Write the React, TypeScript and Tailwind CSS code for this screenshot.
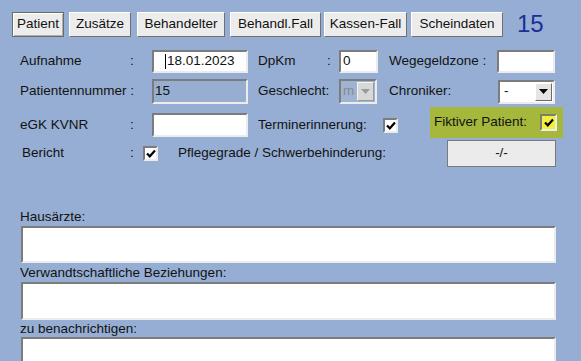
import React from "react";

const sunken =
  "border-2 border-t-[#7c7c7c] border-l-[#7c7c7c] border-r-[#ececec] border-b-[#ececec]";

function Check({ yellow = false, size = 15 }: { yellow?: boolean; size?: number }) {
  return (
    <div
      className={`${sunken} flex items-center justify-center ${yellow ? "bg-[#f3f03c]" : "bg-white"}`}
      style={{ width: size, height: size }}
    >
      <svg width="10" height="9" viewBox="0 0 10 9">
        <polyline points="1,4.5 3.8,7.3 9,1.5" fill="none" stroke="#000" strokeWidth="2.2" />
      </svg>
    </div>
  );
}

function Tab({ label, w, ml, active = false }: { label: string; w: number; ml: number; active?: boolean }) {
  return (
    <div
      className={`h-[25px] flex items-center justify-center bg-[#ececec] text-[13.5px] text-[#111] ${
        active
          ? "border border-[#6a6a6a] shadow-[inset_1px_1px_0_#ffffff,inset_-1px_-1px_0_#b0b0b0]"
          : "border border-t-white border-l-white border-r-[#707070] border-b-[#707070]"
      }`}
      style={{ width: w, marginLeft: ml }}
    >
      {label}
    </div>
  );
}

function Arrow({ color }: { color: string }) {
  return (
    <svg width="9" height="5" viewBox="0 0 9 5">
      <polygon points="0,0 9,0 4.5,5" fill={color} />
    </svg>
  );
}

export default function App() {
  return (
    <div
      className="w-[581px] h-[361px] overflow-hidden bg-[#96aed3] flex flex-col text-[13.5px] text-[#121212]"
      style={{ fontFamily: '"Liberation Sans", Arial, sans-serif' }}
    >
      {/* Tabs */}
      <div className="flex items-center mt-[12px] h-[25px]">
        <Tab label="Patient" w={52} ml={12} active />
        <Tab label="Zusätze" w={62} ml={5} />
        <Tab label="Behandelter" w={88} ml={6} />
        <Tab label="Behandl.Fall" w={91} ml={5} />
        <Tab label="Kassen-Fall" w={83} ml={3} />
        <Tab label="Scheindaten" w={92} ml={4} />
        <div className="ml-[14px] text-[24px] leading-none text-[#1b2f98] -mt-[2px]">15</div>
      </div>

      <div className="flex flex-col pl-[20px]">
        {/* Row 1 */}
        <div className="flex items-center h-[23px] mt-[13px]">
          <div className="w-[110px]">Aufnahme</div>
          <div className="w-[22px]">:</div>
          <div className={`${sunken} w-[96px] h-[23px] bg-white flex items-center pl-[11px]`}>
            <span className="w-px h-[15px] bg-black mr-[1px]" />
            18.01.2023
          </div>
          <div className="w-[69px] ml-[10px]">DpKm</div>
          <div className="w-[12px]">:</div>
          <div className={`${sunken} w-[39px] h-[23px] bg-white flex items-center pl-[2px]`}>0</div>
          <div className="w-[108px] ml-[11px]">Wegegeldzone :</div>
          <div className={`${sunken} w-[58px] h-[23px] bg-white`} />
        </div>

        {/* Row 2 */}
        <div className="flex items-center h-[25px] mt-[6px]">
          <div className="w-[132px]">Patientennummer :</div>
          <div className={`${sunken} w-[96px] h-[25px] bg-[#98aed0] flex items-center pl-[1px]`}>15</div>
          <div className="w-[81px] ml-[10px]">Geschlecht:</div>
          <div className={`${sunken} w-[38px] h-[25px] bg-[#9fb3d2] flex items-center`}>
            <span className="pl-[2px] text-[#8a8a8a] flex-1">m</span>
            <div className="w-[17px] h-[19px] mr-[1px] bg-[#d8d8d8] border border-t-[#f4f4f4] border-l-[#f4f4f4] border-r-[#9a9a9a] border-b-[#9a9a9a] flex items-center justify-center">
              <Arrow color="#9a9a9a" />
            </div>
          </div>
          <div className="w-[109px] ml-[12px]">Chroniker:</div>
          <div className={`${sunken} w-[57px] h-[24px] bg-white flex items-center`}>
            <span className="pl-[4px] flex-1">-</span>
            <div className="w-[17px] h-[18px] mr-[1px] bg-[#e4e4e4] border border-t-white border-l-white border-r-[#6a6a6a] border-b-[#6a6a6a] flex items-center justify-center">
              <Arrow color="#000" />
            </div>
          </div>
        </div>

        {/* Row 3 */}
        <div className="flex items-center h-[24px] mt-[9px]">
          <div className="w-[110px]">eGK KVNR</div>
          <div className="w-[22px]">:</div>
          <div className={`${sunken} w-[96px] h-[24px] bg-white`} />
          <div className="w-[125px] ml-[10px]">Terminerinnerung:</div>
          <Check size={15} />
          <div className="ml-[32px] self-start -mt-[6px] w-[133px] h-[31px] bg-[#a5b83c] flex items-center pl-[4px]">
            <span className="w-[106px]">Fiktiver Patient:</span>
            <Check yellow size={17} />
          </div>
        </div>

        {/* Row 4 */}
        <div className="flex items-center h-[27px] mt-[3px]">
          <div className="w-[110px] pl-[2px]">Bericht</div>
          <div className="w-[13px]">:</div>
          <Check size={15} />
          <div className="w-[269px] ml-[20px]">Pflegegrade / Schwerbehinderung:</div>
          <div className="w-[109px] h-[27px] bg-[#ebebeb] border border-[#7a7a7a] flex items-center justify-center">
            -/-
          </div>
        </div>

        {/* Text areas */}
        <div className="h-[16px] leading-[16px] mt-[42px]">Hausärzte:</div>
        <div className={`${sunken} w-[535px] h-[37px] bg-white mt-[1px] ml-[1px]`} />
        <div className="h-[16px] leading-[16px] mt-[2px]">Verwandtschaftliche Beziehungen:</div>
        <div className={`${sunken} w-[535px] h-[38px] bg-white mt-[1px] ml-[1px]`} />
        <div className="h-[16px] leading-[16px] mt-[1px]">zu benachrichtigen:</div>
        <div className={`${sunken} w-[535px] h-[40px] bg-white ml-[1px]`} />
      </div>
    </div>
  );
}
